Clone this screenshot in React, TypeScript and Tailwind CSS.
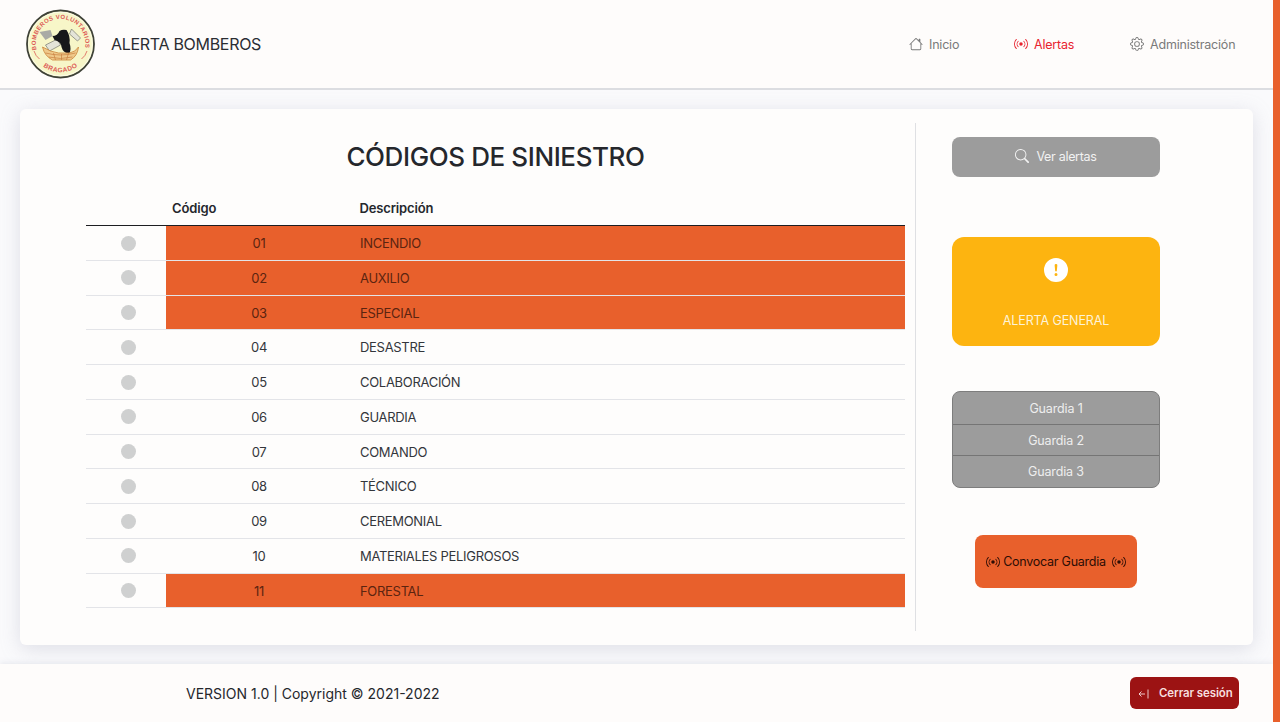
import React from 'react';
import { BsHouse, BsBroadcast, BsGear, BsSearch, BsExclamationCircleFill } from 'react-icons/bs';

const codes = [
  { code: '01', name: 'INCENDIO', on: true },
  { code: '02', name: 'AUXILIO', on: true },
  { code: '03', name: 'ESPECIAL', on: true },
  { code: '04', name: 'DESASTRE', on: false },
  { code: '05', name: 'COLABORACIÓN', on: false },
  { code: '06', name: 'GUARDIA', on: false },
  { code: '07', name: 'COMANDO', on: false },
  { code: '08', name: 'TÉCNICO', on: false },
  { code: '09', name: 'CEREMONIAL', on: false },
  { code: '10', name: 'MATERIALES PELIGROSOS', on: false },
  { code: '11', name: 'FORESTAL', on: true },
];

const Logo = () => (
  <svg viewBox="0 0 70 70" className="w-[70px] h-[70px] shrink-0 -translate-x-[0.5px]">
    <circle cx="35" cy="35" r="33.5" fill="#f7f6c8" stroke="#3f4238" strokeWidth="1.8" />
    <circle cx="35" cy="35" r="31.8" fill="none" stroke="#fbfbe6" strokeWidth="1" />
    <defs>
      <path id="logoTop" d="M 11 41 A 24.8 24.8 0 1 1 59 41" />
      <path id="logoBottom" d="M 14 54 A 28.5 28.5 0 0 0 56 54" />
    </defs>
    <text fontFamily="'Liberation Sans', sans-serif" fontSize="6" fontWeight="700" fill="#dc5a55">
      <textPath href="#logoTop" textLength="88">BOMBEROS VOLUNTARIOS</textPath>
    </text>
    <text fontFamily="'Liberation Sans', sans-serif" fontSize="6.6" fontWeight="700" fill="#dc5a55" letterSpacing="0.4" textAnchor="middle">
      <textPath href="#logoBottom" startOffset="50%">BRAGADO</textPath>
    </text>
    <path d="M8.5 42 Q10 47 14 50 M61.5 42 Q60 47 56 50" fill="none" stroke="#dc5a55" strokeWidth="0.8" />
    <path d="M14 23 L25 21 L27 27 L20 31 Z" fill="#a9aaa5" />
    <path d="M20 36 L32 30 L35 36 L24 42 Z" fill="#e4e4d8" stroke="#77786e" strokeWidth="0.7" />
    <path d="M46 20 L55 29 L52 32 L44 25 Z" fill="#e4e4d8" stroke="#77786e" strokeWidth="0.7" />
    <path d="M27 27 Q32 27 34 22 Q37 20 41 21 Q45 27 44 34 Q46 40 44 44 Q38 45 36 38 Q36 33 29 31 Z" fill="#17171a" />
    <path d="M17 38 Q25 43 33 44 L44 44 Q50 43 53 38 Q52 47 45 51 L27 51 Q19 47 17 38 Z" fill="#efc98a" stroke="#cf8f46" strokeWidth="0.9" />
    <path d="M20 44 Q35 48 50 44 M23 48 Q35 51 47 48 M28 44 L30 51 M36 45 L36 51 M43 44 L41 51" fill="none" stroke="#c9803f" strokeWidth="0.7" />
  </svg>
);

const NavItem = ({ icon, label, active, w }: { icon: React.ReactNode; label: string; active?: boolean; w: string }) => (
  <a className={`flex items-center gap-[6px] text-[12.5px] tracking-[-0.2px] ${w} ${active ? 'text-[#e8232f]' : 'text-[#7a7a7a]'}`}>
    {icon}
    <span className="pt-[2px]">{label}</span>
  </a>
);

const CodeRow = ({ code, name, on }: { code: string; name: string; on: boolean }) => (
  <div className="flex h-[34.75px] border-b border-[#e3e4e8]">
    <div className="w-[80px] pl-[4px] flex justify-center pt-[9.5px]">
      <span className="w-[15px] h-[15px] rounded-full bg-[#cfd0d0]" />
    </div>
    <div className={`flex-1 flex items-center text-[13px] tracking-[-0.3px] pt-[2px] ${on ? 'bg-[#e8602c] text-[#5b2410]' : 'text-[#33363b]'}`}>
      <span className="w-[186px] text-center">{code}</span>
      <span className="ml-[8px]">{name}</span>
    </div>
  </div>
);

export default function App() {
  return (
    <div className="relative w-full h-[722px] overflow-hidden flex flex-col bg-[#fafafc] font-['Inter',sans-serif] pr-[7px]">
      <div className="absolute top-0 right-0 bottom-0 w-[7px] bg-[#e8602c]" />

      <header className="h-[90px] shrink-0 bg-[#fefcfb] border-b-2 border-[#dcdde1] flex items-center pl-[26px]">
        <Logo />
        <span className="ml-[15px] text-[16px] text-[#2b2d33] tracking-[-0.3px]">ALERTA BOMBEROS</span>
        <nav className="ml-auto flex items-center pr-[37px]">
          <NavItem w="w-[105px]" icon={<BsHouse size={14} className="shrink-0" />} label="Inicio" />
          <NavItem w="w-[116px]" active icon={<BsBroadcast size={14} className="shrink-0" />} label="Alertas" />
          <NavItem w="w-[106px]" icon={<BsGear size={14} className="shrink-0" />} label="Administración" />
        </nav>
      </header>

      <main className="flex-1 px-[20px] pt-[19px] pb-[19px]">
        <div className="h-[536px] bg-[#fefdfc] rounded-[6px] shadow-[0_4px_20px_rgba(150,155,175,0.28)] flex py-[14px]">
          <section className="w-[895px] pl-[66px] pr-[10px] shrink-0">
            <h1 className="h-[63px] pt-[4px] flex items-center justify-center text-[26px] font-medium text-[#25272c] tracking-[-0.4px]">
              CÓDIGOS DE SINIESTRO
            </h1>
            <div className="flex items-center mt-[14px] pb-[8px] h-[26px] border-b border-[#1d1e22] text-[13px] font-semibold text-[#25272c] tracking-[-0.15px]">
              <span className="ml-[86px] w-[187.5px]">Código</span>
              <span>Descripción</span>
            </div>
            {codes.map((c) => (
              <CodeRow key={c.code} code={c.code} name={c.name} on={c.on} />
            ))}
          </section>

          <aside className="flex-1 border-l border-[#dfe0e3] pl-[36px] pt-[14px]">
            <button className="w-[208px] h-[40px] rounded-[8px] bg-[#9c9c9c] text-[#f2f2f2] text-[12.5px] tracking-[-0.3px] flex items-center justify-center gap-[7px]">
              <BsSearch size={14} className="shrink-0 -translate-y-[1px]" />
              <span className="pt-[1px]">Ver alertas</span>
            </button>

            <button className="mt-[60px] w-[208px] h-[109px] rounded-[12px] bg-[#fdb410] text-[#fdf3d8] text-[12.5px] tracking-[-0.1px] flex flex-col items-center pt-[21px]">
              <BsExclamationCircleFill size={24} className="text-white" />
              <span className="mt-[30px]">ALERTA GENERAL</span>
            </button>

            <div className="mt-[45px] w-[208px] h-[97px] rounded-[8px] bg-[#9c9c9c] border border-[#7d7d7d] text-[#eeeeee] text-[12.5px] tracking-[-0.15px] flex flex-col divide-y divide-[#757575] overflow-hidden">
              <div className="flex-1 flex items-center justify-center pt-[3px]">Guardia 1</div>
              <div className="flex-1 flex items-center justify-center pt-[2px]">Guardia 2</div>
              <div className="flex-1 flex items-center justify-center pt-[2px]">Guardia 3</div>
            </div>

            <button className="mt-[47px] ml-[23px] w-[162px] h-[53px] pt-[1px] rounded-[8px] bg-[#e8602c] text-[#2c0d05] text-[12.5px] tracking-[-0.25px] flex items-center justify-center gap-[3px]">
              <BsBroadcast size={14} className="shrink-0" />
              <span className="pt-[1px]">Convocar Guardia</span>
              <BsBroadcast size={14} className="ml-[3px] shrink-0" />
            </button>
          </aside>
        </div>
      </main>

      <footer className="h-[58px] shrink-0 bg-[#fefcfb] shadow-[0_-2px_5px_rgba(150,155,175,0.15)] flex items-center pl-[186px] pr-[34px]">
        <span className="text-[14px] text-[#25272c]">VERSION 1.0 | Copyright © 2021-2022</span>
        <button className="ml-auto w-[109px] h-[32px] rounded-[6px] bg-[#9c1313] text-[#f6dede] text-[11.5px] font-semibold tracking-[-0.1px] flex items-center pl-[8px] gap-[10px] pt-[1px]">
          <svg width="11" height="10" viewBox="0 0 11 10" fill="none" stroke="currentColor" strokeWidth="0.9">
            <path d="M7 5H1M3.5 2.5 1 5l2.5 2.5M10 0.5v9" />
          </svg>
          Cerrar sesión
        </button>
      </footer>
    </div>
  );
}
